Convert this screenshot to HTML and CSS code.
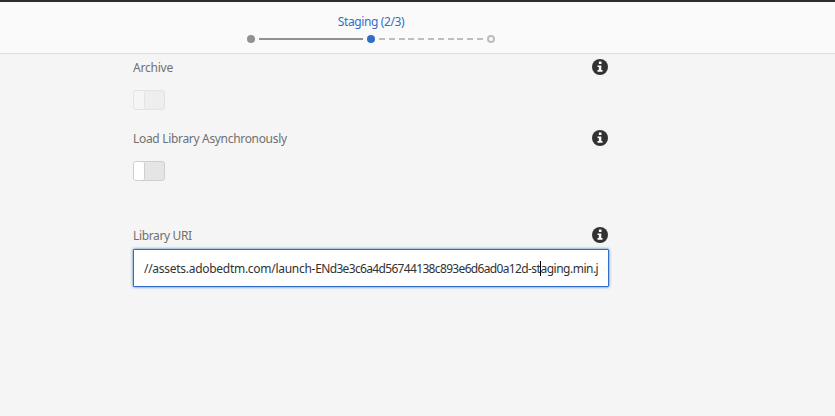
FILE: index.html
```html
<!DOCTYPE html>
<html lang="en">
<head>
<meta charset="utf-8">
<title>Staging</title>
<link rel="stylesheet" href="styles.css">
</head>
<body>
<svg class="defs" aria-hidden="true"><symbol id="info" viewBox="0 0 16 16"><circle cx="8" cy="8" r="8" fill="#323232"/><path d="M6.9 2.5h2.6v2.4H6.9zM5.5 6.4h3.8v4.7h1.2v1.6H5.5v-1.6h1.3V8H5.5z" fill="#fff"/></symbol></svg>
<header class="wizard">
  <div class="step-title">Staging (2/3)</div>
  <div class="steps">
    <span class="dot"></span><span class="line"></span><span class="dot current"></span><span class="line dashed"></span><span class="dot pending"></span>
  </div>
</header>
<main class="form">
  <section class="field archive">
    <div class="row"><label class="label-archive">Archive</label><svg class="info"><use href="#info"/></svg></div>
    <div class="switch disabled"><span></span></div>
  </section>
  <section class="field async">
    <div class="row"><label class="label-async">Load Library Asynchronously</label><svg class="info"><use href="#info"/></svg></div>
    <div class="switch"><span></span></div>
  </section>
  <section class="field">
    <div class="row"><label class="label-uri">Library URI</label><svg class="info"><use href="#info"/></svg></div>
    <div class="input"><span class="url">//assets.adobedtm.com/launch-<span class="hash">ENd3e3c6a4d56744138c893e6d6ad0a12d</span><span class="suffix">-st<i class="caret"></i>aging.min.j</span></span></div>
  </section>
</main>
</body>
</html>
```
FILE: styles.css
```css
* { box-sizing: border-box; }
body { margin: 0; height: 416px; overflow: hidden; background: #f5f5f5; color: #707070; font: 12px/18px "Noto Sans", sans-serif; }
.defs { display: none; }
.wizard { height: 54px; border-top: 2px solid #2d2d2d; border-bottom: 1px solid #dedede; background: #fafafa; padding-top: 11px; }
.step-title { width: 742px; text-align: center; color: #326ec8; white-space: nowrap; letter-spacing: -0.38px; }
.steps { display: flex; align-items: center; height: 8px; margin: 4px 0 0 247px; }
.dot { width: 8px; height: 8px; border-radius: 50%; background: #919191; }
.dot.current { background: #326ec8; }
.dot.pending { background: #fafafa; border: 2px solid #bebebe; }
.line { width: 104px; height: 2px; margin: 0 4px; background: #919191; }
.line.dashed { background: repeating-linear-gradient(90deg, #bebebe 0 6px, transparent 6px 9.8px); }
.form { width: 476px; margin-left: 133px; padding-top: 5px; }
.row { display: flex; justify-content: space-between; height: 18px; white-space: nowrap; }
.label-archive { letter-spacing: -0.22px; }
.label-async { letter-spacing: -0.32px; }
.label-uri { letter-spacing: -0.36px; }
.info { width: 16px; height: 16px; margin-right: 1px; }
.archive { height: 71px; }
.async { height: 97px; }
.switch { width: 32px; height: 20px; margin-top: 13px; border: 1px solid #cfcfcf; border-radius: 3px; background: #e5e5e5; }
.switch span { display: block; width: 11px; height: 18px; border-right: 1px solid #cfcfcf; border-radius: 2px; background: #fff; }
.switch.disabled { border-color: #e3e3e3; background: #eee; }
.switch.disabled span { border-color: #e3e3e3; background: #f5f5f5; }
.input { height: 38px; margin-top: 4px; border: 1px solid #326ec8; border-radius: 1px; background: #fff; box-shadow: 0 0 3px #326ec8; color: #323232; padding: 10px 10px 0; white-space: nowrap; }
.url { letter-spacing: -0.28px; }
.hash { letter-spacing: -0.66px; }
.suffix { letter-spacing: -0.5px; }
.caret { display: inline-block; width: 1px; height: 15px; margin-right: -1px; background: #000; vertical-align: -3px; }
```
